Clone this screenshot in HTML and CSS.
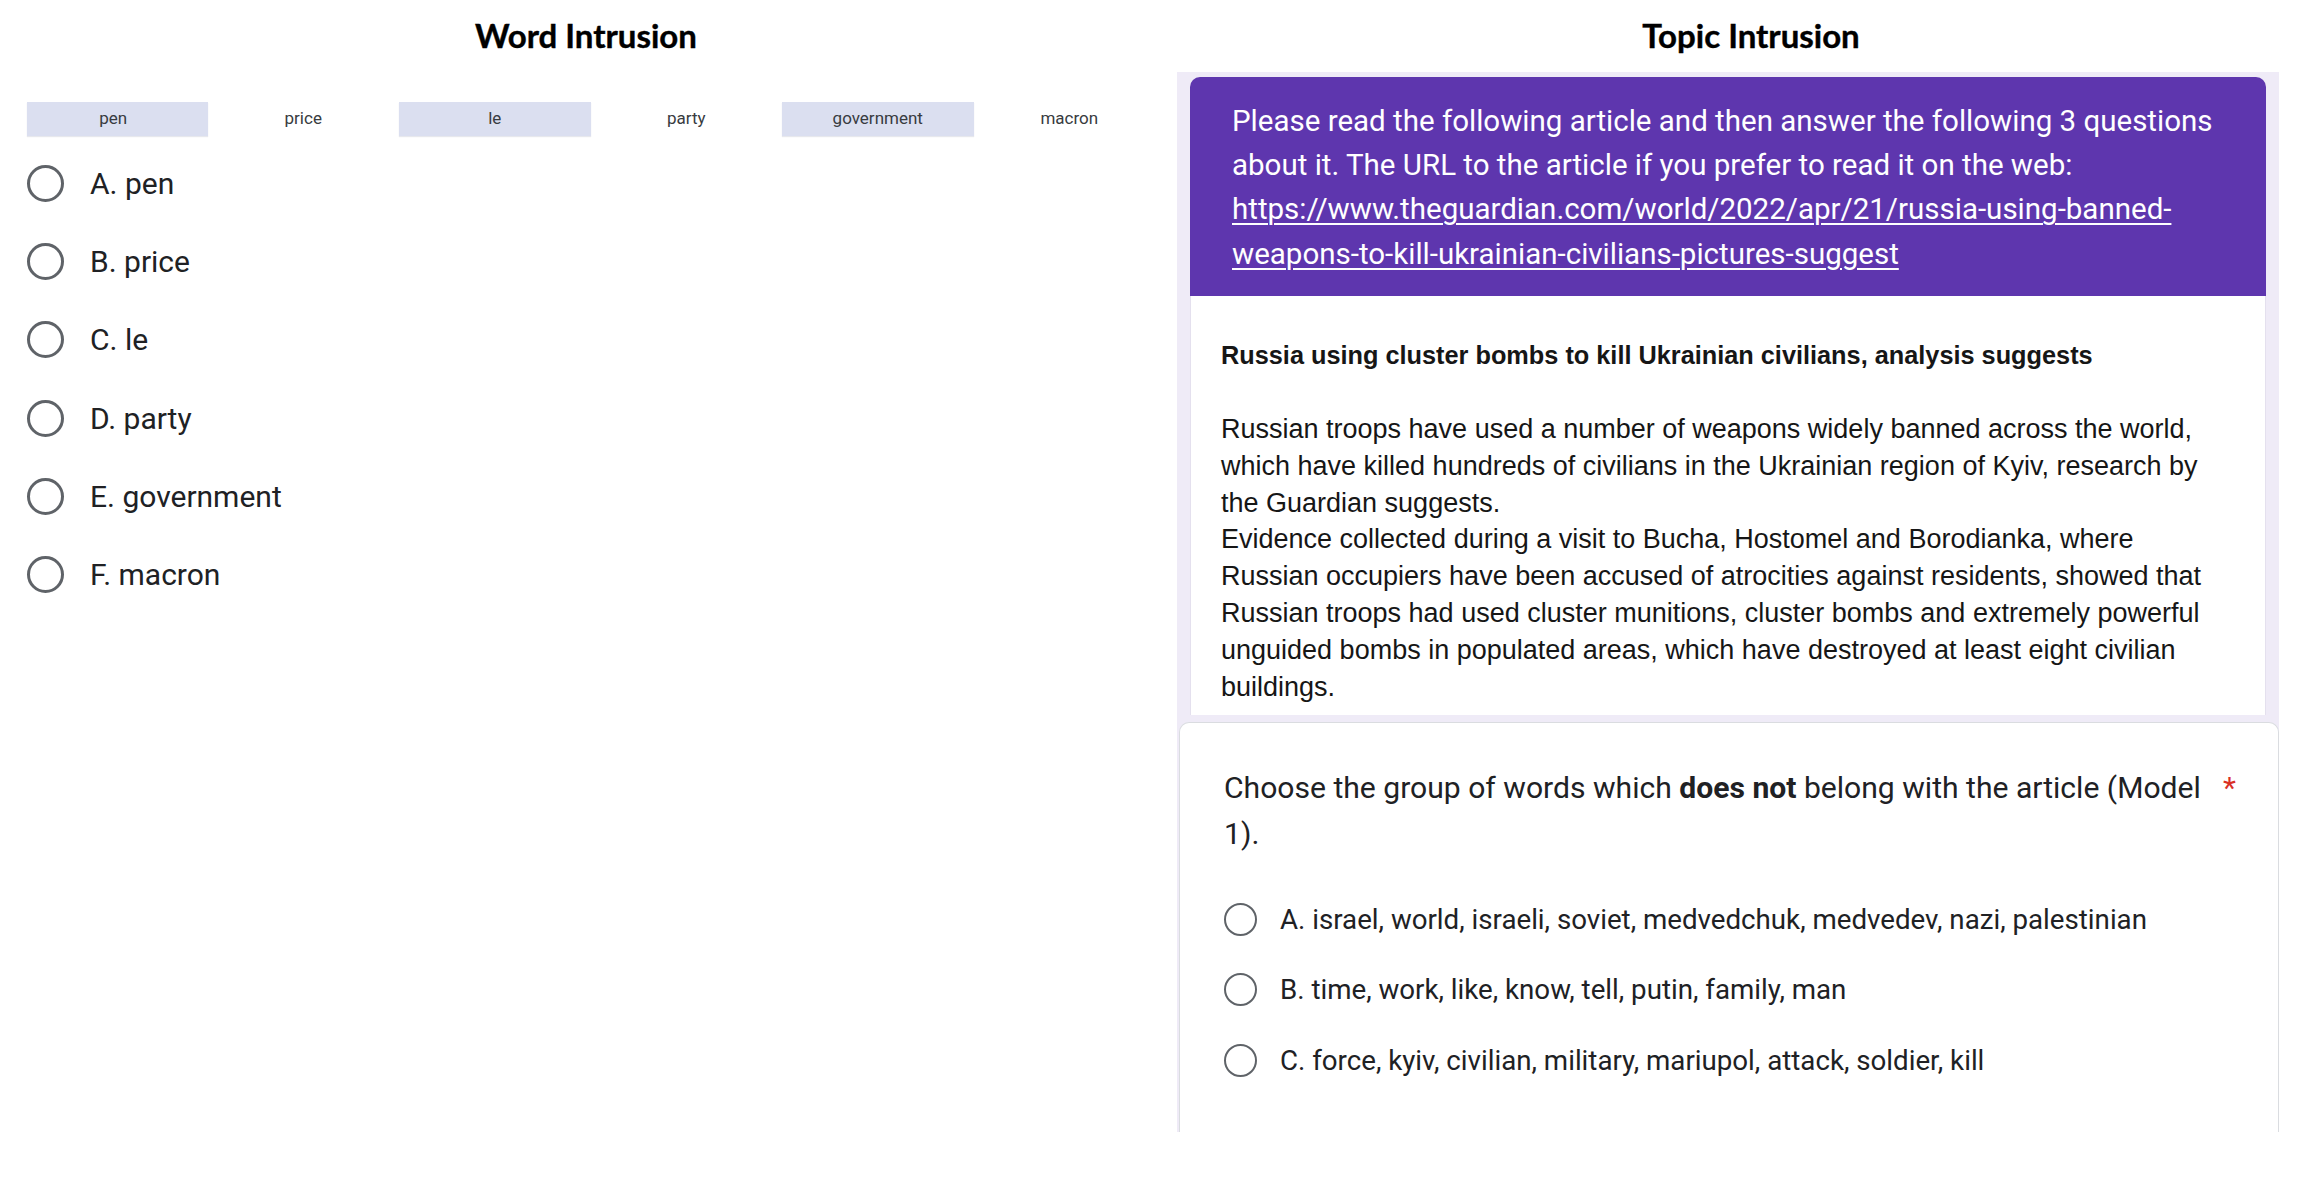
FILE: index.html
```html
<!DOCTYPE html>
<html lang="en">
<head>
<meta charset="utf-8">
<title>Word Intrusion / Topic Intrusion</title>
<link rel="stylesheet" href="styles.css">
</head>
<body>
<main class="figure">
  <section class="panel word">
    <h2 class="fig-title">Word Intrusion</h2>
    <div class="chips">
      <div class="chip hl first">pen</div>
      <div class="chip">price</div>
      <div class="chip hl">le</div>
      <div class="chip">party</div>
      <div class="chip hl">government</div>
      <div class="chip">macron</div>
    </div>
    <ul class="options big">
      <li class="opt"><span class="radio"></span><span class="opt-text">A. pen</span></li>
      <li class="opt"><span class="radio"></span><span class="opt-text">B. price</span></li>
      <li class="opt"><span class="radio"></span><span class="opt-text">C. le</span></li>
      <li class="opt"><span class="radio"></span><span class="opt-text">D. party</span></li>
      <li class="opt"><span class="radio"></span><span class="opt-text">E. government</span></li>
      <li class="opt"><span class="radio"></span><span class="opt-text">F. macron</span></li>
    </ul>
  </section>
  <section class="panel topic">
    <h2 class="fig-title topic-title">Topic Intrusion</h2>
    <div class="form">
      <div class="form-header">
        <p class="intro">Please read the following article and then answer the following 3 questions<br>about it. The URL to the article if you prefer to read it on the web:<br><a class="link" href="#">https://www.theguardian.com/world/2022/apr/21/russia-using-banned-<br>weapons-to-kill-ukrainian-civilians-pictures-suggest</a></p>
      </div>
      <div class="article">
        <p class="article-title">Russia using cluster bombs to kill Ukrainian civilians, analysis suggests</p>
        <p class="article-body">Russian troops have used a number of weapons widely banned across the world,<br>which have killed hundreds of civilians in the Ukrainian region of Kyiv, research by<br>the Guardian suggests.<br>Evidence collected during a visit to Bucha, Hostomel and Borodianka, where<br>Russian occupiers have been accused of atrocities against residents, showed that<br>Russian troops had used cluster munitions, cluster bombs and extremely powerful<br>unguided bombs in populated areas, which have destroyed at least eight civilian<br>buildings.</p>
      </div>
      <div class="question">
        <div class="q-head">
          <p class="q-text">Choose the group of words which <b>does not</b> belong with the article (Model<br>1).</p>
          <span class="required">*</span>
        </div>
        <ul class="options small">
          <li class="opt"><span class="radio"></span><span class="opt-text">A. israel, world, israeli, soviet, medvedchuk, medvedev, nazi, palestinian</span></li>
          <li class="opt"><span class="radio"></span><span class="opt-text">B. time, work, like, know, tell, putin, family, man</span></li>
          <li class="opt"><span class="radio"></span><span class="opt-text">C. force, kyiv, civilian, military, mariupol, attack, soldier, kill</span></li>
        </ul>
      </div>
    </div>
  </section>
</main>
</body>
</html>
```

FILE: styles.css
```css
* { box-sizing: border-box; }

html, body {
  margin: 0;
  padding: 0;
  background: #ffffff;
}

body {
  width: 2306px;
  height: 1204px;
  overflow: hidden;
  font-family: Roboto, "Liberation Sans", sans-serif;
  color: #202124;
}

.figure {
  display: grid;
  grid-template-columns: 1172px 1102px;
  column-gap: 5px;
  align-items: start;
}

.fig-title {
  margin: 0;
  height: 72px;
  padding-top: 19px;
  font-family: Lato, "Liberation Sans", sans-serif;
  font-weight: 700;
  font-size: 33px;
  line-height: 33px;
  color: #000000;
  text-align: center;
  -webkit-text-stroke: 0.4px #000000;
}

.topic-title {
  padding-left: 46px;
}

/* ---------- Word intrusion ---------- */
.chips {
  margin-top: 30px;
  padding-left: 16px;
  display: grid;
  grid-template-columns: repeat(6, 191.5px);
  height: 34px;
}

.chip {
  display: flex;
  align-items: center;
  justify-content: center;
  height: 34px;
  padding-bottom: 3px;
  font-family: Roboto, sans-serif;
  font-size: 17px;
  color: #383b40;
}

.chip.hl {
  background: #dbdff0;
  box-shadow: 0 1px 1px rgba(60, 64, 110, 0.12);
}

.chip.first {
  margin-left: 11px;
  padding-right: 8px;
}

.options {
  list-style: none;
  margin: 0;
  padding: 0;
}

.options.big {
  margin-top: 8px;
  padding-left: 27px;
}

.opt {
  display: flex;
  align-items: center;
}

.options.big .opt {
  height: 78.3px;
  gap: 26px;
}

.radio {
  flex: none;
  border-radius: 50%;
  border: 3px solid #5f6368;
}

.options.big .radio {
  width: 37px;
  height: 37px;
}

.options.big .opt-text {
  font-size: 30px;
  color: #202124;
  white-space: nowrap;
}

/* ---------- Topic intrusion (form) ---------- */
.form {
  background: #efebf7;
  padding: 5px 0 0 0;
}

.form-header {
  margin: 0 13px;
  background: #5e36ae;
  border-radius: 10px 10px 0 0;
  padding: 22px 30px 20px 42px;
  color: #ffffff;
}

.intro {
  margin: 0;
  font-size: 29.5px;
  line-height: 44.2px;
  white-space: nowrap;
}

.link {
  color: #ffffff;
  text-decoration: underline;
  text-decoration-thickness: 2px;
  text-underline-offset: 4px;
}

.article {
  margin: 0 13px;
  background: #ffffff;
  border-left: 1px solid #e4e0ee;
  border-right: 1px solid #e4e0ee;
  height: 419px;
  padding: 41.6px 20px 0 30px;
  font-family: "Liberation Sans", Arial, sans-serif;
  color: #161616;
}

.article-title {
  margin: 0 0 36.8px;
  font-weight: 700;
  font-size: 25.3px;
  line-height: 36.8px;
  white-space: nowrap;
}

.article-body {
  margin: 0;
  font-size: 27px;
  line-height: 36.8px;
  white-space: nowrap;
}

.question {
  margin: 7px 0 0 2px;
  height: 410px;
  background: #ffffff;
  border: 1px solid #dadce0;
  border-bottom: none;
  border-radius: 10px 10px 0 0;
  padding: 42px 20px 0 44px;
}

.q-head {
  display: flex;
  align-items: flex-start;
}

.q-text {
  margin: 0;
  width: 999px;
  font-size: 30.1px;
  line-height: 46px;
  white-space: nowrap;
  color: #202124;
}

.q-text b {
  font-weight: 700;
}

.required {
  font-size: 30px;
  line-height: 46px;
  color: #d93025;
}

.options.small {
  margin-top: 27px;
}

.options.small .opt {
  height: 70.5px;
  gap: 23px;
}

.options.small .radio {
  width: 33px;
  height: 33px;
  border-width: 2.6px;
}

.options.small .opt-text {
  font-size: 27.7px;
  color: #202124;
  white-space: nowrap;
}
```
